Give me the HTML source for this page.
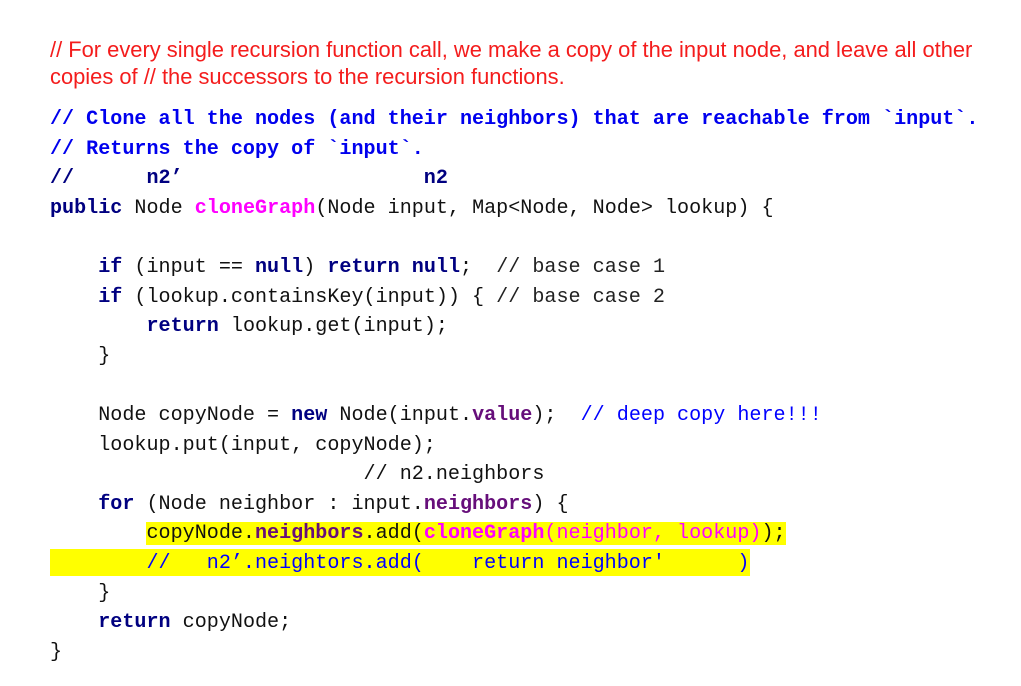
<!DOCTYPE html>
<html><head><meta charset="utf-8"><style>
body{margin:0;background:#fff;width:1021px;height:686px;overflow:hidden;position:relative}
.red{position:absolute;left:50px;top:36px;font-family:"Liberation Sans",sans-serif;font-size:21.9px;line-height:27px;color:#f41c1c;white-space:nowrap}
pre{position:absolute;left:50px;top:105px;margin:0;font-family:"Liberation Mono",monospace;font-size:20.1px;line-height:29.6px;color:#111}
.k{color:#000080;font-weight:bold}
.c{color:#0000ff}
.cb{color:#0000ee;font-weight:bold}
.m{color:#ff00ff;font-weight:bold}
.mn{color:#ff00ff}
.p{color:#660e7a;font-weight:bold}
.g{color:#222}
.hl{background:#ffff00}
.hl2{position:absolute;left:50px;top:549px;width:700px;height:27px;background:#ffff00}
</style></head><body>
<div class="red">// For every single recursion function call, we make a copy of the input node, and leave all other<br>copies of // the successors to the recursion functions.</div>
<div class="hl2"></div>
<pre><span class="cb">// Clone all the nodes (and their neighbors) that are reachable from `input`.</span>
<span class="cb">// Returns the copy of `input`.</span>
<span class="k">//      n2’                    n2</span>
<span class="k">public</span> Node <span class="m">cloneGraph</span>(Node input, Map&lt;Node, Node&gt; lookup) {

    <span class="k">if</span> (input == <span class="k">null</span>) <span class="k">return null</span>;  <span class="g">// base case 1</span>
    <span class="k">if</span> (lookup.containsKey(input)) { <span class="g">// base case 2</span>
        <span class="k">return</span> lookup.get(input);
    }

    Node copyNode = <span class="k">new</span> Node(input.<span class="p">value</span>);  <span class="c">// deep copy here!!!</span>
    lookup.put(input, copyNode);
                          // n2.neighbors
    <span class="k">for</span> (Node neighbor : input.<span class="p">neighbors</span>) {
        <span class="hl">copyNode.<span class="p">neighbors</span>.add(<span class="m">cloneGraph</span><span class="mn">(neighbor, lookup)</span>);</span>
        <span class="c">//   n2’.neightors.add(    return neighbor'      )</span>
    }
    <span class="k">return</span> copyNode;
}</pre>
</body></html>
